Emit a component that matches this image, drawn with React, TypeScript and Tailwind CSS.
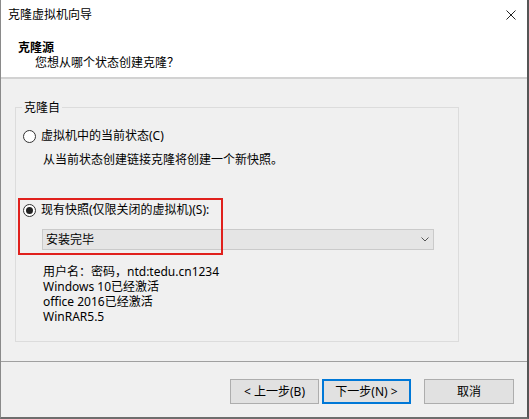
const font = "font-['Segoe_UI','Noto_Sans','Noto_Sans_CJK_SC',sans-serif]";

function Radio({ checked }: { checked?: boolean }) {
  return (
    <span className="flex h-[13px] w-[13px] shrink-0 items-center justify-center rounded-full border border-[#333] bg-white">
      {checked && <span className="h-[7px] w-[7px] rounded-full bg-[#222]" />}
    </span>
  );
}

const info = ["用户名：密码，ntd:tedu.cn1234", "Windows 10已经激活", "office 2016已经激活", "WinRAR5.5"];

export default function App() {
  return (
    <div className={`${font} flex h-[419px] w-[529px] flex-col border-b-2 border-l border-r-2 border-b-[#6e6e6e] border-l-[#8a8a8a] border-r-[#555] bg-[#f0f0f0] text-[12px] text-black`}>
      <div className="flex h-[30px] items-center justify-between bg-white pl-[7px] pr-[11px]">
        <span className="leading-[16px]">克隆虚拟机向导</span>
        <svg width="10" height="10" viewBox="0 0 10 10" className="block">
          <path d="M0.5 0.5 L9.5 9.5 M9.5 0.5 L0.5 9.5" stroke="#222" strokeWidth="1" fill="none" />
        </svg>
      </div>
      <div className="h-[49px] border-b-2 border-[#d2d2d2] bg-white pl-[17px] pt-[10px]">
        <div className="font-bold leading-[15px]">克隆源</div>
        <div className="pl-[17px] leading-[15px]">您想从哪个状态创建克隆？</div>
      </div>

      <div className="relative ml-[14px] mt-[28px] h-[235px] w-[444px] border border-[#dcdcdc] pl-[7px] pt-[20px]">
        <span className="absolute left-[6px] top-[-8px] bg-[#f0f0f0] px-[2px] leading-[15px]">克隆自</span>
        <div className="absolute left-[2px] top-[90px] h-[57px] w-[205px] border-2 border-[#e0201c]" />

        <div className="flex h-[16px] items-center gap-[5px]">
          <Radio />
          <span className="leading-[16px]">虚拟机中的当前状态(C)</span>
        </div>
        <div className="ml-[20px] mt-[8px] leading-[16px]">从当前状态创建链接克隆将创建一个新快照。</div>

        <div className="mt-[34px] flex h-[16px] items-center gap-[5px]">
          <Radio checked />
          <span className="leading-[16px]">现有快照(仅限关闭的虚拟机)(S):</span>
        </div>
        <div className="ml-[19px] mt-[11px] flex h-[21px] w-[392px] items-center justify-between border border-[#cacaca] bg-[#e5e5e5] pl-[3px] pr-[4px]">
          <span className="leading-[16px]">安装完毕</span>
          <svg width="8" height="5" viewBox="0 0 8 5" className="block">
            <path d="M0.5 0.5 L4 4 L7.5 0.5" stroke="#555" strokeWidth="1" fill="none" />
          </svg>
        </div>

        <div className="ml-[20px] mt-[14px]">
          {info.map((line) => (
            <div key={line} className="leading-[15px]">{line}</div>
          ))}
        </div>
      </div>

      <div className="mt-[19px] border-t border-[#a0a0a0]" />

      <div className="mt-[17px] flex justify-end pr-[13px]">
        <button className="h-[25px] w-[89px] border border-[#adadad] bg-[#e1e1e1] leading-[16px]">&lt; 上一步(B)</button>
        <button className="ml-[3px] h-[25px] w-[89px] border-2 border-[#0078d7] bg-[#e1e1e1] leading-[16px]">下一步(N) &gt;</button>
        <button className="ml-[13px] h-[25px] w-[90px] border border-[#adadad] bg-[#e1e1e1] leading-[16px]">取消</button>
      </div>
    </div>
  );
}
